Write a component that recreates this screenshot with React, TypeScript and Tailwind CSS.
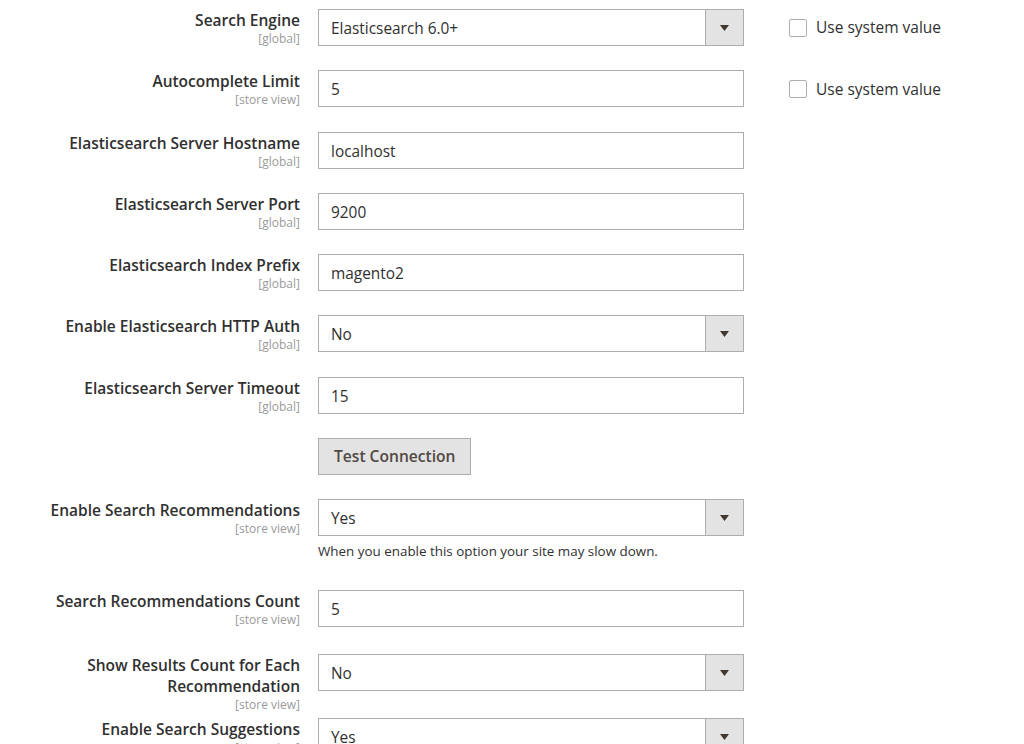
import React from "react";

type Field = {
  label: string;
  scope: "global" | "store view";
  kind: "select" | "text" | "button";
  value: string;
  note?: string;
  useSystem?: boolean;
  rowClass?: string;
};

const fields: Field[] = [
  { label: "Search Engine", scope: "global", kind: "select", value: "Elasticsearch 6.0+", useSystem: true },
  { label: "Autocomplete Limit", scope: "store view", kind: "text", value: "5", useSystem: true },
  { label: "Elasticsearch Server Hostname", scope: "global", kind: "text", value: "localhost" },
  { label: "Elasticsearch Server Port", scope: "global", kind: "text", value: "9200" },
  { label: "Elasticsearch Index Prefix", scope: "global", kind: "text", value: "magento2" },
  { label: "Enable Elasticsearch HTTP Auth", scope: "global", kind: "select", value: "No" },
  { label: "Elasticsearch Server Timeout", scope: "global", kind: "text", value: "15" },
  { label: "", scope: "global", kind: "button", value: "Test Connection" },
  {
    label: "Enable Search Recommendations",
    scope: "store view",
    kind: "select",
    value: "Yes",
    note: "When you enable this option your site may slow down.",
    rowClass: "mb-[30px]",
  },
  { label: "Search Recommendations Count", scope: "store view", kind: "text", value: "5", rowClass: "mb-[27px]" },
  {
    label: "Show Results Count for Each Recommendation",
    scope: "store view",
    kind: "select",
    value: "No",
    rowClass: "mb-[6px]",
  },
  { label: "Enable Search Suggestions", scope: "store view", kind: "select", value: "Yes" },
];

function Control({ field }: { field: Field }) {
  if (field.kind === "button") {
    return (
      <button className="h-[37px] px-[15px] pt-[1px] bg-[#e3e3e3] border border-[#adadad] text-[15.6px] font-semibold text-[#514943]">
        {field.value}
      </button>
    );
  }

  return (
    <div className="flex h-[37px] w-[426px] border border-[#adadad] bg-white">
      <div className="flex-1 flex items-center pl-3 pt-[2px] text-[15.4px] text-[#303030]">
        {field.value}
      </div>
      {field.kind === "select" && (
        <div className="w-[38px] flex items-center justify-center bg-[#e3e3e3] border-l border-[#adadad]">
          <svg width="9" height="6" viewBox="0 0 9 6">
            <path d="M0 0h9L4.5 6z" fill="#41362f" />
          </svg>
        </div>
      )}
    </div>
  );
}

function FieldRow({ field }: { field: Field }) {
  return (
    <div className={`flex items-start ${field.rowClass ?? "mb-[24.3px]"}`}>
      {/* Label */}
      <div className="w-[300px] shrink-0 pl-10 pt-[1px] text-right">
        {field.label && (
          <>
            <div className="text-[15.5px] leading-[21px] font-semibold text-[#303030]">
              {field.label}
            </div>
            <div className="text-[12px] leading-[15px] text-[#9a9a9a]">
              [{field.scope}]
            </div>
          </>
        )}
      </div>

      {/* Value */}
      <div className="ml-[18px] w-[426px] shrink-0">
        <Control field={field} />
        {field.note && (
          <p className="mt-[6px] text-[13.4px] leading-[18px] text-[#303030]">
            {field.note}
          </p>
        )}
      </div>

      {/* System value */}
      {field.useSystem && (
        <label className="ml-[45px] h-[37px] pt-[1px] flex items-center gap-[9px] text-[15.5px] text-[#303030]">
          <span className="w-[18px] h-[18px] border border-[#adadad] rounded-[2px] bg-white" />
          Use system value
        </label>
      )}
    </div>
  );
}

export default function App() {
  return (
    <div
      className="w-[1024px] h-[744px] overflow-hidden bg-white pt-[9px]"
      style={{ fontFamily: '"Open Sans", "Liberation Sans", sans-serif' }}
    >
      {fields.map((f, i) => (
        <FieldRow key={i} field={f} />
      ))}
    </div>
  );
}
